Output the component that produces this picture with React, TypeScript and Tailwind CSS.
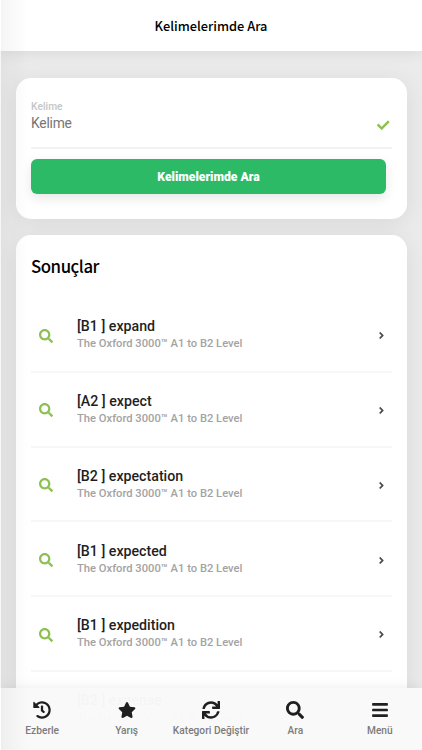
import React from 'react';
import type { IconType } from 'react-icons';
import { FaAngleRight, FaBars, FaCheck, FaHistory, FaSearch, FaStar, FaSync } from 'react-icons/fa';

interface Word {
  level: string;
  word: string;
}

const words: Word[] = [
  { level: 'B1', word: 'expand' },
  { level: 'A2', word: 'expect' },
  { level: 'B2', word: 'expectation' },
  { level: 'B1', word: 'expected' },
  { level: 'B1', word: 'expedition' },
  { level: 'B2', word: 'expense' },
];

const tabs: { label: string; icon: IconType }[] = [
  { label: 'Ezberle', icon: FaHistory },
  { label: 'Yarış', icon: FaStar },
  { label: 'Kategori Değiştir', icon: FaSync },
  { label: 'Ara', icon: FaSearch },
  { label: 'Menü', icon: FaBars },
];

const Header: React.FC = () => (
  <header className="relative flex h-[51px] shrink-0 items-center justify-center bg-white shadow-[0_2px_14px_rgba(0,0,0,0.08)]">
    <h1 className="font-['Noto_Sans_CJK_SC',sans-serif] text-[12.8px] leading-5 font-medium text-black">
      Kelimelerimde Ara
    </h1>
  </header>
);

const SearchCard: React.FC = () => (
  <section className="mr-[15.5px] ml-4 mt-[27px] h-[141px] shrink-0 rounded-[15px] bg-white px-[15px] pt-[21px] shadow-[0_4px_24px_rgba(0,0,0,0.08)]">
    <div className="flex h-[50px] items-start justify-between border-b-2 border-[#f2f2f2]">
      <label className="flex flex-col">
        <span className="mt-px text-[10.3px] leading-[14px] font-medium text-[#c6c6c6]">Kelime</span>
        <input
          className="-mt-px h-5 w-60 text-[13.8px] leading-5 tracking-[-0.2px] outline-none placeholder:text-[#757575]"
          placeholder="Kelime"
        />
      </label>
      <FaCheck className="mt-[20px] mr-[2px] size-[12.5px] text-[#8cc152]" />
    </div>
    <button className="mt-[10px] block h-[35px] w-[355px] rounded-[6px] bg-[#2dba66] pt-px text-[12.2px] font-black text-white shadow-[0_4px_12px_rgba(0,0,0,0.1)]">
      Kelimelerimde Ara
    </button>
  </section>
);

const WordRow: React.FC<Word> = ({ level, word }) => (
  <li className="flex h-[74.75px] items-center border-b-2 border-[#f7f7f7]">
    <FaSearch className="mt-[2.5px] ml-2 size-[14px] shrink-0 text-[#8cc152]" />
    <div className="ml-6 flex-1">
      <p className="text-[14.2px] leading-[18px] font-medium text-[#1f1f1f]">
        [{level} ] {word}
      </p>
      <p className="mt-px -mb-px text-[11.2px] leading-4 font-medium text-[#a3a3a3]">The Oxford 3000™ A1 to B2 Level</p>
    </div>
    <FaAngleRight className="mt-[3px] mr-[5px] size-[11px] text-[#4a4a4a]" />
  </li>
);

const TabBar: React.FC = () => (
  <nav className="absolute inset-x-0 bottom-0 flex h-[62px] bg-[#f9f9f9]/[0.98] shadow-[0_0_12px_rgba(0,0,0,0.08)]">
    {tabs.map(({ label, icon: Icon }) => (
      <a key={label} className="flex flex-1 basis-0 flex-col items-center pt-[13px]">
        <Icon className="size-[18px] text-[#1f1f1f]" />
        <span className="mt-[5px] text-[10.2px] leading-[14px] font-medium whitespace-nowrap text-[#7c7c7c]">
          {label}
        </span>
      </a>
    ))}
  </nav>
);

export default function App() {
  return (
    <div className="relative flex h-[750px] w-[422px] flex-col overflow-hidden bg-[#ebebeb] font-[Roboto,sans-serif]">
      <Header />
      <SearchCard />
      <section className="mr-[15.5px] ml-4 mt-4 h-[600px] shrink-0 rounded-[15px] bg-white px-[15px] pt-[19px] shadow-[0_4px_24px_rgba(0,0,0,0.08)]">
        <h2 className="font-['Noto_Sans_CJK_SC',sans-serif] text-[16.8px] leading-6 font-medium tracking-[-0.45px] text-black">
          Sonuçlar
        </h2>
        <ul className="mt-5">
          {words.map((item) => (
            <WordRow key={item.word} {...item} />
          ))}
        </ul>
      </section>
      <TabBar />
      {/* Shade cast by the closed side menu */}
      <div className="pointer-events-none absolute inset-y-0 left-0 w-7 border-l border-white/60 bg-linear-to-r from-black/4 to-transparent" />
    </div>
  );
}
